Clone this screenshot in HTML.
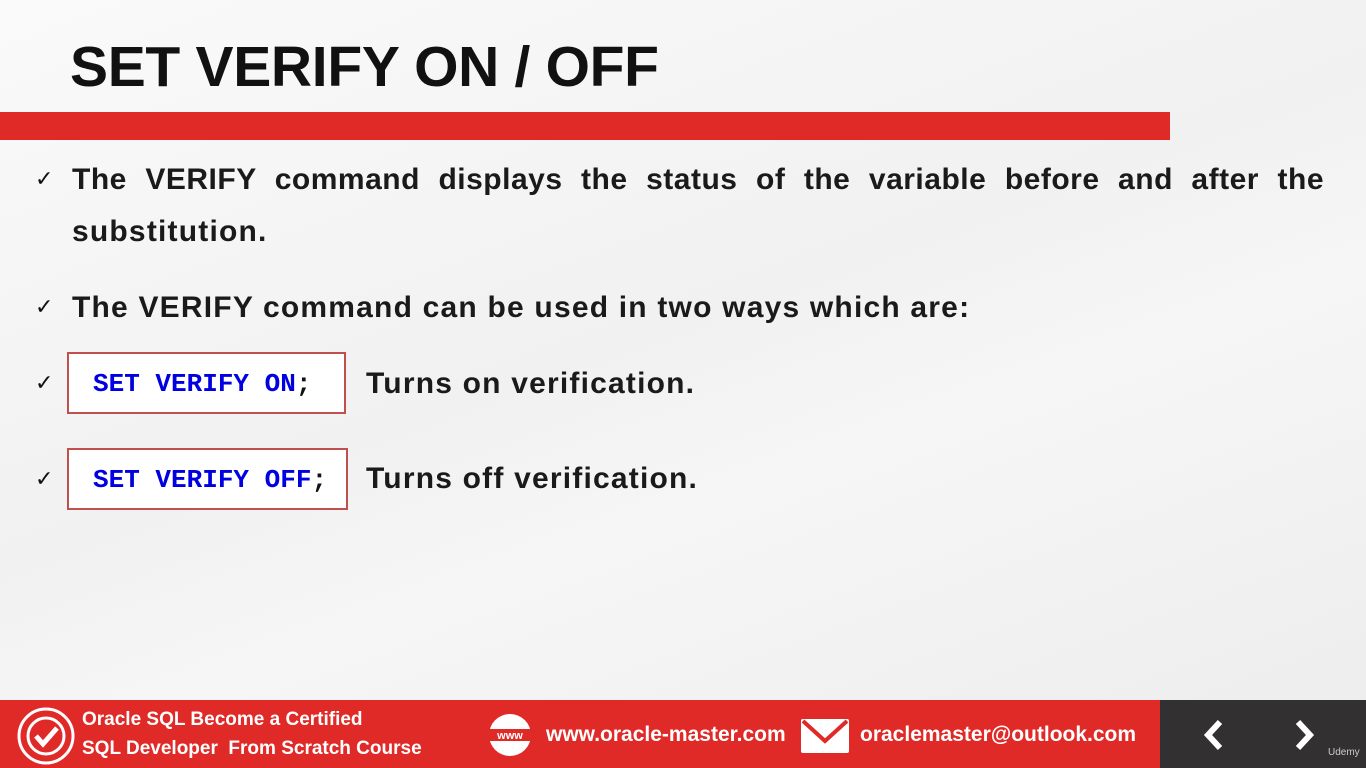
<!DOCTYPE html>
<html><head><meta charset="utf-8"><style>
*{margin:0;padding:0;box-sizing:border-box}
body{width:1366px;height:768px;overflow:hidden;position:relative;font-family:"Liberation Sans",sans-serif;background:linear-gradient(160deg,#fafafa 0%,#f1f1f1 45%,#f6f6f6 60%,#ececec 100%)}
.t{position:absolute;left:70px;top:34px;font-size:57px;font-weight:bold;color:#111;letter-spacing:-0.3px}
.bar{position:absolute;left:0;top:112px;width:1170px;height:28px;background:#e02a27}
.p{position:absolute;font-size:30px;font-weight:bold;color:#1a1a1a;letter-spacing:1.2px}
.ck{position:absolute;font-size:22px;color:#111}
.box{position:absolute;left:67px;width:279px;height:62px;border:2px solid #c0504d;background:#fff;font-family:"Liberation Mono",monospace;font-weight:bold;font-size:26px;color:#0000e0;padding:15px 0 0 24px}
.box span{color:#111}
.f{position:absolute;left:0;top:700px;width:1160px;height:68px;background:#e02a27}
.d{position:absolute;left:1160px;top:700px;width:206px;height:68px;background:#333032}
.ft{position:absolute;color:#fff;font-weight:bold;font-size:19px}
</style></head><body>
<div class="t">SET VERIFY ON / OFF</div>
<div class="bar"></div>
<div class="ck" style="left:35px;top:166px">✓</div>
<div class="p" style="left:72px;top:163px;width:1252px;text-align:justify;text-align-last:justify;letter-spacing:0.5px">The VERIFY command displays the status of the variable before and after the</div>
<div class="p" style="left:72px;top:215px">substitution.</div>
<div class="ck" style="left:35px;top:294px">✓</div>
<div class="p" style="left:72px;top:291px">The VERIFY command can be used in two ways which are:</div>
<div class="ck" style="left:35px;top:370px">✓</div>
<div class="box" style="top:352px">SET VERIFY ON<span>;</span></div>
<div class="p" style="left:366px;top:367px">Turns on verification.</div>
<div class="ck" style="left:35px;top:466px">✓</div>
<div class="box" style="top:448px;width:281px">SET VERIFY OFF<span>;</span></div>
<div class="p" style="left:366px;top:462px">Turns off verification.</div>
<div class="f"></div><div class="d"></div>
<svg style="position:absolute;left:16px;top:706px" width="60" height="60" viewBox="0 0 60 60"><circle cx="30" cy="30" r="27" fill="none" stroke="#fff" stroke-width="3"/><circle cx="30" cy="30" r="18" fill="none" stroke="#fff" stroke-width="3"/><path d="M20 30l7 8 14-16" fill="none" stroke="#fff" stroke-width="5"/></svg>
<div class="ft" style="left:82px;top:709px">Oracle SQL Become a Certified</div>
<div class="ft" style="left:82px;top:738px">SQL Developer&nbsp; From Scratch Course</div>
<svg style="position:absolute;left:487px;top:712px" width="46" height="46" viewBox="0 0 46 46"><circle cx="23" cy="23" r="21" fill="#fff"/><rect x="0" y="17" width="46" height="12" fill="#e02a27"/><text x="23" y="27" font-size="11" font-weight="bold" fill="#fff" text-anchor="middle" font-family="Liberation Sans">www</text></svg>
<div class="ft" style="left:546px;top:723px;font-size:21px">www.oracle-master.com</div>
<svg style="position:absolute;left:801px;top:719px" width="48" height="34" viewBox="0 0 48 34"><rect width="48" height="34" rx="2" fill="#fff"/><path d="M2 2l22 20 22-20" fill="none" stroke="#e02a27" stroke-width="4"/></svg>
<div class="ft" style="left:860px;top:723px;font-size:21px">oraclemaster@outlook.com</div>
<svg style="position:absolute;left:1200px;top:718px" width="120" height="36" viewBox="0 0 120 36"><path d="M20 4L8 17l12 13" fill="none" stroke="#fff" stroke-width="6"/><path d="M98 4l12 13-12 13" fill="none" stroke="#fff" stroke-width="6"/></svg>
<div style="position:absolute;left:1328px;top:747px;font-size:10px;color:#ccc">Udemy</div>
</body></html>
